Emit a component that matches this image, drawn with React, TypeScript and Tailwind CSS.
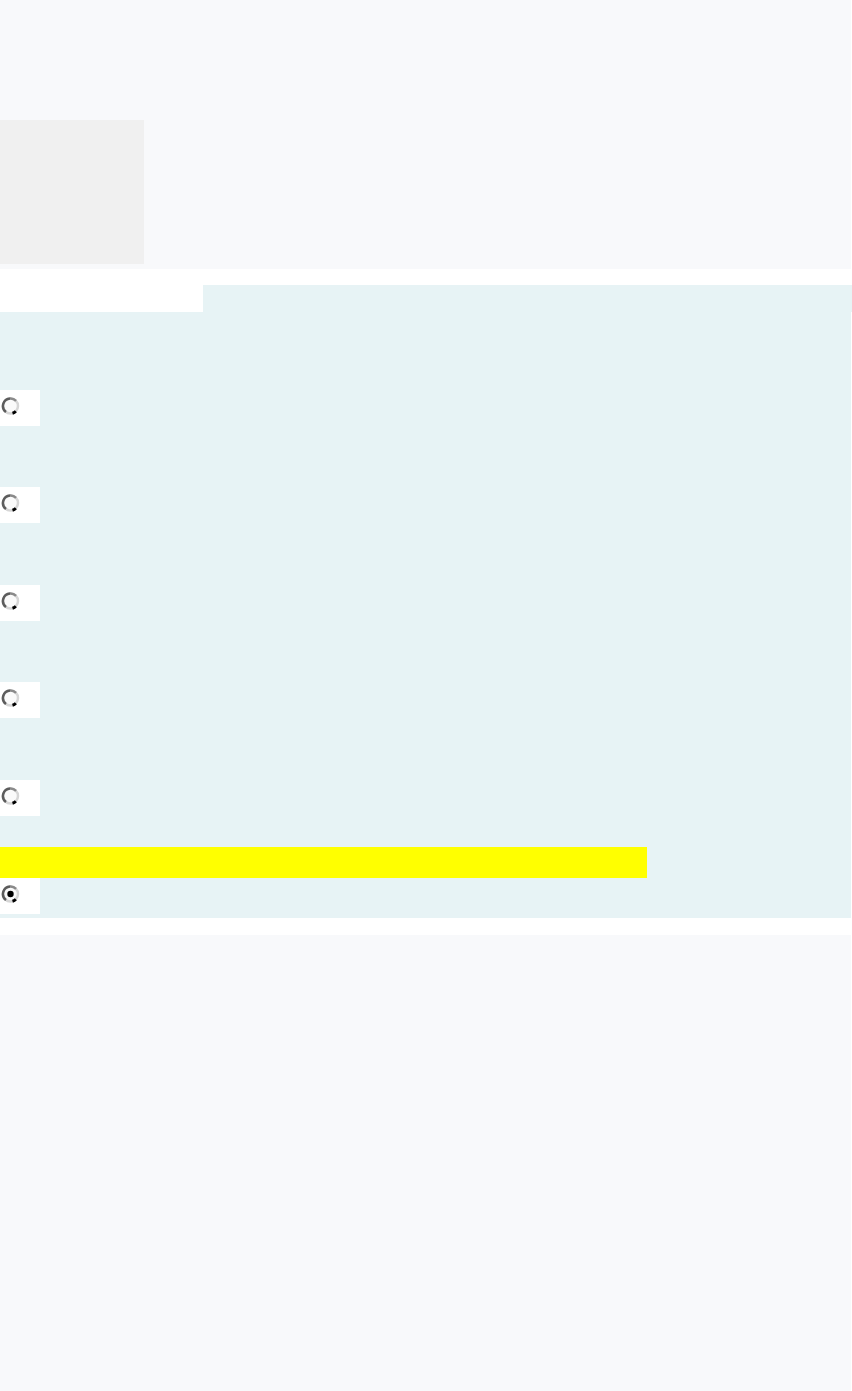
import React from 'react';

function Radio({ checked = false }: { checked?: boolean }) {
    return (
        <svg width="19" height="20" viewBox="0 0 19 20" className="block">
            <circle cx="9.5" cy="10" r="7.5" fill="#fafafa" stroke="#d6d6d6" strokeWidth="2.5" />
            <path d="M 5 16 A 7.5 7.5 0 0 1 9 2.5" fill="none" stroke="#5c5c5c" strokeWidth="2.5" />
            <path d="M 9 2.5 A 7.5 7.5 0 0 1 15 4.8" fill="none" stroke="#8a8a8a" strokeWidth="2.5" />
            <path d="M 11.5 17.3 A 7.5 7.5 0 0 0 14.8 15.3" fill="none" stroke="#000" strokeWidth="3" />
            {checked && <circle cx="9.5" cy="10" r="3.2" fill="#000" />}
        </svg>
    );
}

function Option({ checked = false }: { checked?: boolean }) {
    return (
        <div className="w-[40px] h-[36px] bg-white pl-[1px] pt-[6px]">
            <Radio checked={checked} />
        </div>
    );
}

export default function App() {
    return (
        <div className="w-[851px] min-h-[1391px] bg-[#f8f9fb]">
            {/* header placeholder */}
            <div className="pt-[120px] pb-[5px]">
                <div className="w-[144px] h-[144px] bg-[#f0f0f0]" />
            </div>

            <div className="bg-white pt-[16px] pb-[17px]">
                <div className="flex">
                    <div className="w-[203px] h-[27px] bg-white shrink-0" />
                    <div className="w-[649px] h-[27px] bg-[#e7f3f5] shrink-0" />
                </div>

                <div className="bg-[#e7f3f5] pt-[78px] pb-[4px] flex flex-col">
                    <Option />
                    <div className="h-[61px]" />
                    <Option />
                    <div className="h-[62px]" />
                    <Option />
                    <div className="h-[61px]" />
                    <Option />
                    <div className="h-[62px]" />
                    <Option />
                    <div className="h-[31px]" />
                    <div className="w-[647px] h-[31px] bg-[#ffff00]" />
                    <Option checked />
                </div>
            </div>
        </div>
    );
}
